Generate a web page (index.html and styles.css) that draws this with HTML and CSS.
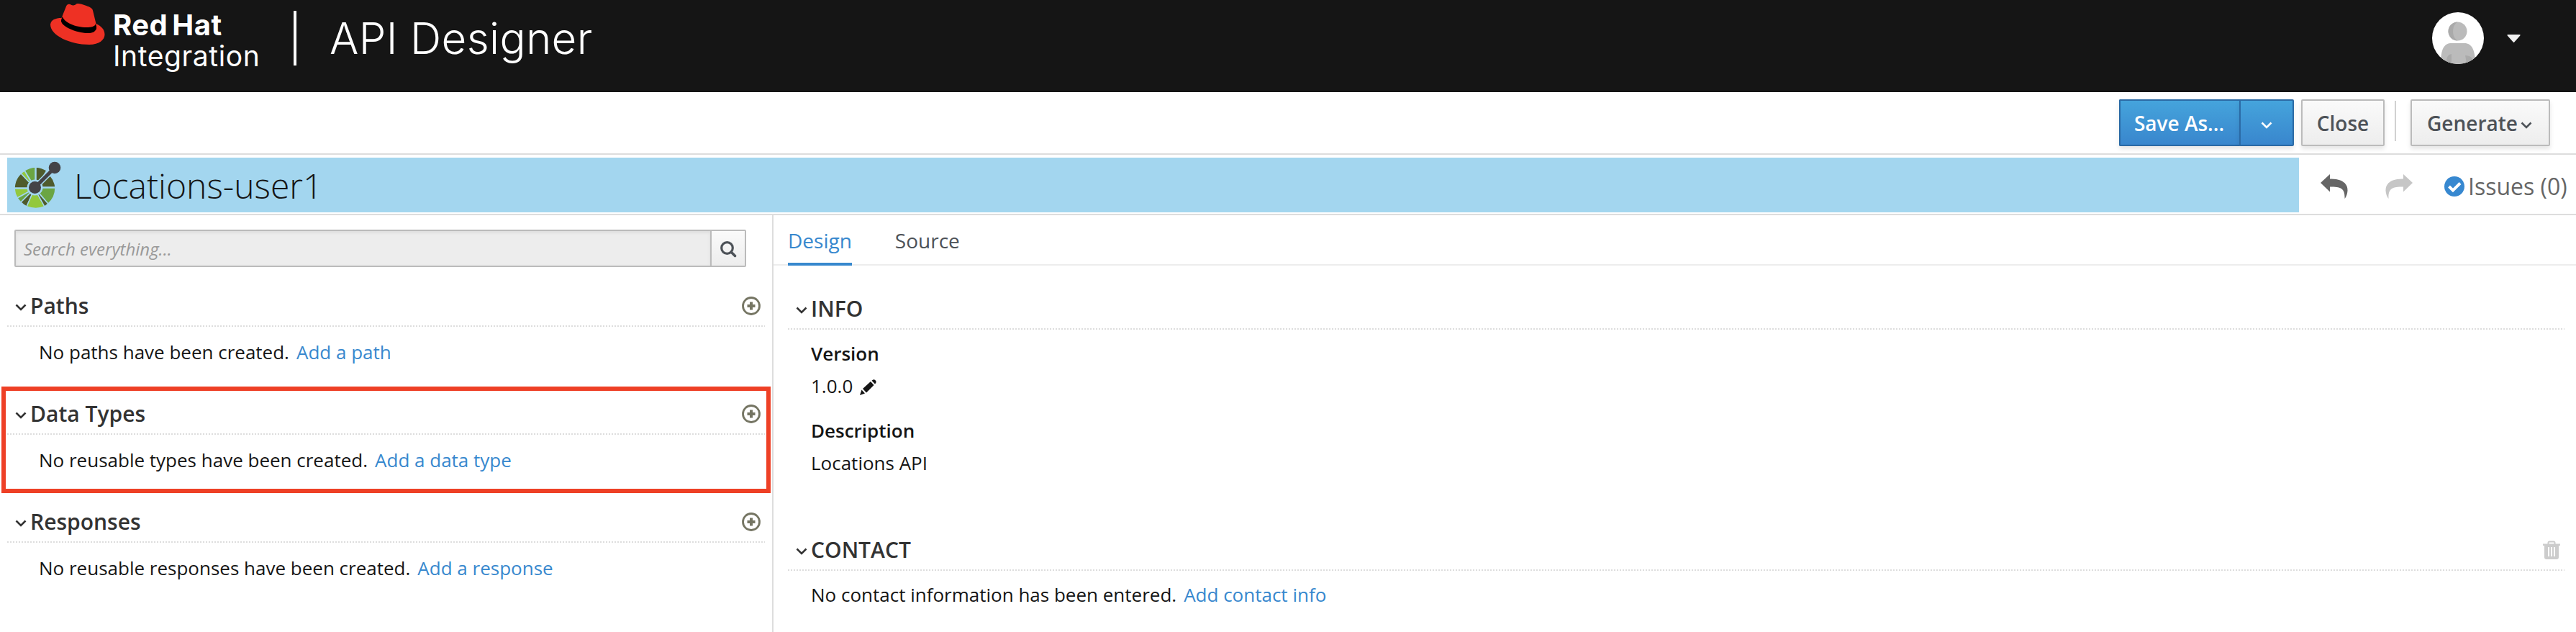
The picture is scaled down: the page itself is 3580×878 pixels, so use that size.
FILE: index.html
```html
<!DOCTYPE html>
<html lang="en">
<head>
<meta charset="utf-8">
<title>API Designer</title>
<link rel="stylesheet" href="styles.css">
</head>
<body>
<svg class="defs" width="0" height="0">
  <symbol id="chev" viewBox="0 0 16 10"><path d="M1.500 1.500 8 8l6.500-6.500" fill="none" stroke="currentColor" stroke-width="2.600"/></symbol>
  <symbol id="plus" viewBox="0 0 26 26"><circle cx="13" cy="13" r="11.500" fill="none" stroke="#757563" stroke-width="2.800"/><path d="M13 7.500v11M7.500 13h11" stroke="#757563" stroke-width="4"/></symbol>
  <symbol id="arrow" viewBox="0 0 38 34"><path d="M0 12 13 0V6.500C30 6 38 13 37.500 23Q37 30 33.500 34C34 21 30 17 13 17.500V24.500Z" fill="currentColor"/></symbol>
</svg>
<header class="masthead">
  <svg class="hat" viewBox="0 0 76 58"><path fill="#ee3124" d="M15.500 20C7 20 1 22.500 0 29C0 44 27 57 54 57C68 57 75.500 50 75.500 43C75.500 36 71 31.500 63.500 28L59 9.500C58 6 55 5 50 3C44 .8 40-.3 37.500.1C35 .6 35 2.500 32 2.500C29 2.500 28.500.7 26 .7C23.500.7 22.300 2.500 21.500 5Z"/><path d="M16.700 17.700C19 26 35 33 50 33C57 33 62 32 63 28Q64.500 32 64 35C62 39.500 58 41 52 41C36 41 13.500 31 15 23Z"/></svg>
  <div class="brand"><span class="brand-name">Red Hat</span><span class="brand-sub">Integration</span></div>
  <div class="brand-rule"></div>
  <h1 class="product">API Designer</h1>
  <div class="user">
    <svg class="avatar" viewBox="0 0 72 72"><defs><clipPath id="av"><circle cx="36" cy="36" r="36"/></clipPath></defs><g clip-path="url(#av)"><path fill="#fff" d="M0 0h72v72H0z"/><ellipse cx="35.500" cy="26.500" rx="13" ry="13" fill="#bbb"/><path fill="#aaa" d="M35.500 13.500a13 13 0 0 0 0 26C27 35 27 18 35.500 13.500Z"/><path fill="#bbb" d="M12 72C12 50 17 43 27 43H45C55 43 60 52 60 72Z"/><path fill="#aaa" d="M20 72C19 63 22 59 27 58V72ZM48 72Q47 65 46 60Q54 60 57 66V72Z"/></g></svg>
    <svg class="caret" viewBox="0 0 19 11"><path fill="#f0f0f0" d="M1.500 0h16q2 0 .8 1.500L10.500 10.300q-1 1.200-2 0L.7 1.500Q-.5 0 1.500 0Z"/></svg>
  </div>
</header>
<div class="toolbar">
  <div class="split"><button class="btn primary save">Save As...</button><button class="btn primary drop"><svg class="chev"><use href="#chev"/></svg></button></div>
  <button class="btn close">Close</button>
  <div class="tool-rule"></div>
  <button class="btn generate">Generate<svg class="chev"><use href="#chev"/></svg></button>
</div>
<div class="titlebar">
  <div class="title">
    <svg class="oai" viewBox="0 0 64 64">
      <g stroke="#a3d6ef" stroke-width="1.500">
        <path fill="#4f5b2c" d="M30 36V7A29 29 0 0 1 45 12Z"/>
        <path fill="#6ba543" d="M29 36V7A29 29 0 0 0 14 12Z"/>
        <path fill="#93c83e" d="M28 36 14 12A29 29 0 0 0 9 16Z"/>
        <path fill="#4f5b2c" d="M28 36 9 16A29 29 0 0 0 0 36Z"/>
        <path fill="#93c83e" d="M28 37H0A29 29 0 0 0 4 50Z"/>
        <path fill="#6ba543" d="M28 37 4 50A29 29 0 0 0 9 56Z"/>
        <path fill="#4f5b2c" d="M28 37 9 56A29 29 0 0 0 17 62Z"/>
        <path fill="#93c83e" d="M28 37 17 62Q30 67 42 62Z"/>
        <path fill="#4f5b2c" d="M28 37 42 62 47 58Z"/>
        <path fill="#6ba543" d="M28 36H57A29 29 0 0 1 47 58Z"/>
        <path fill="#4f5b2c" d="M28 35H57A29 29 0 0 0 50 19Z"/>
      </g>
      <circle cx="28.500" cy="35.500" r="11" fill="#a3d6ef"/>
      <path d="M28 36 56 8" stroke="#a3d6ef" stroke-width="8"/>
      <path d="M28 36 56 8" stroke="#444347" stroke-width="5"/>
      <circle cx="28.500" cy="35.500" r="8.500" fill="#444347"/><circle cx="56" cy="8" r="8.300" fill="#444347"/>
    </svg>
    <span class="title-text">Locations-user1</span>
  </div>
  <div class="actions">
    <svg class="undo"><use href="#arrow"/></svg>
    <svg class="redo"><use href="#arrow"/></svg>
    <svg class="check" viewBox="0 0 28 28"><circle cx="14" cy="14" r="14" fill="#3788d0"/><path d="m6.500 14 5.500 5.500 10-10" fill="none" stroke="#fff" stroke-width="4"/></svg>
    <span class="issues">Issues (0)</span>
  </div>
</div>
<main class="main">
  <aside class="side">
    <div class="search"><div class="search-input">Search everything...</div><div class="search-btn"><svg viewBox="0 0 22 22"><circle cx="9.500" cy="9.500" r="7.800" fill="none" stroke="#4d5258" stroke-width="3.200"/><path d="m15 15 5.500 5.500" stroke="#4d5258" stroke-width="3.600" stroke-linecap="round"/></svg></div></div>
    <section class="group"><h2 class="head"><svg class="chev"><use href="#chev"/></svg><span>Paths</span><svg class="plus"><use href="#plus"/></svg></h2><p class="empty">No paths have been created.<a class="link">Add a path</a></p></section>
    <section class="group marked"><h2 class="head"><svg class="chev"><use href="#chev"/></svg><span>Data Types</span><svg class="plus"><use href="#plus"/></svg></h2><p class="empty">No reusable types have been created.<a class="link">Add a data type</a></p></section>
    <section class="group"><h2 class="head"><svg class="chev"><use href="#chev"/></svg><span>Responses</span><svg class="plus"><use href="#plus"/></svg></h2><p class="empty">No reusable responses have been created.<a class="link">Add a response</a></p></section>
  </aside>
  <div class="content">
    <nav class="tabs"><span class="tab active">Design</span><span class="tab">Source</span></nav>
    <section class="panel info">
      <h2 class="head"><svg class="chev"><use href="#chev"/></svg><span>INFO</span></h2>
      <div class="label">Version</div>
      <div class="value">1.0.0<svg class="pencil" viewBox="0 0 24 22"><path fill="#151515" d="M0 22 2.500 14.500 7 19.500ZM4 13 15 3 19.500 8 9 18.500ZM16.500 1.800Q19-1 21.500 1.200Q24 3.500 21 6.500Z"/></svg></div>
      <div class="label">Description</div>
      <div class="value">Locations API</div>
    </section>
    <section class="panel contact">
      <h2 class="head"><svg class="chev"><use href="#chev"/></svg><span>CONTACT</span><svg class="trash" viewBox="0 0 24 26"><path fill="none" stroke="#ccc" stroke-width="2" d="M7.500 5V3q0-1.500 1.500-1.500h6q1.500 0 1.500 1.500v2"/><path fill="#ccc" fill-rule="evenodd" d="M0 4.500h24V7h-2v16q0 3-3 3H5q-3 0-3-3V7H0ZM7 9v13h2V9ZM11 9v13h2V9ZM15 9v13h2V9Z"/></svg></h2>
      <p class="empty">No contact information has been entered.<a class="link">Add contact info</a></p>
    </section>
  </div>
</main>
</body>
</html>
```
FILE: styles.css
```css
*, *::before, *::after { box-sizing: border-box; }
body { margin: 0; width: 3580px; height: 878px; overflow: hidden; background: #fff; color: #151515; font: 26px/40px "Open Sans", sans-serif; }
svg { display: block; flex: none; overflow: visible; }
.defs { position: absolute; }
h1, h2, p { margin: 0; font-weight: 400; }
.masthead { height: 128px; background: #151515; color: #fff; display: flex; align-items: flex-start; padding-left: 70px; font-family: Inter, sans-serif; }
.hat { width: 76px; height: 58px; margin-top: 5px; }
.brand { width: 262px; padding: 13px 0 0 11px; display: flex; flex-direction: column; font-size: 39px; line-height: 43px; white-space: nowrap; }
.brand-name { font-size: 40px; font-weight: 700; letter-spacing: .5px; word-spacing: -4px; }
.brand-sub { letter-spacing: .6px; }
.brand-rule { width: 4px; height: 76px; background: #fff; margin-top: 15px; }
.product { font-size: 60px; font-weight: 300; line-height: 76px; letter-spacing: .35px; margin: 15px 0 0 46px; white-space: nowrap; }
.user { margin-left: auto; display: flex; padding: 17px 77px 0 0; }
.avatar { width: 72px; height: 72px; }
.caret { width: 19px; height: 11px; margin: 31px 0 0 32px; }
.toolbar { height: 87px; border-bottom: 2px solid #ddd; padding: 10px 36px 0 0; display: flex; justify-content: flex-end; }
.btn { height: 65px; border: 2px solid #bbb; border-radius: 2px; background: linear-gradient(#fafafa, #ededed); box-shadow: 0 4px 6px rgba(3,3,3,.1); color: #4d5258; font: 600 28px/40px "Open Sans", sans-serif; display: flex; align-items: center; justify-content: center; padding: 0; white-space: nowrap; }
.split { display: flex; margin-right: 10px; }
.primary { border-color: #2b6aa5; background: linear-gradient(#45a4dc, #3986cd); color: #fff; }
.save { width: 167px; border-right: 0; border-radius: 2px 0 0 2px; padding-right: 2px; }
.drop { width: 76px; border-radius: 0 2px 2px 0; }
.chev { width: 16px; height: 10px; }
.drop .chev { margin-top: 6px; }
.close { width: 116px; }
.tool-rule { width: 2px; height: 56px; background: #d1d1d1; margin: 2px 20px 0 14px; }
.generate { width: 194px; padding-right: 2px; }
.generate .chev { margin: 6px 0 0 4px; }
.titlebar { height: 84px; border-bottom: 2px solid #ddd; padding: 4px 0 0 10px; display: flex; }
.title { flex: none; width: 3185px; height: 76px; background: #a3d6ef; display: flex; padding: 6px 0 0 10px; }
.oai { width: 64px; height: 64px; }
.title-text { font-size: 48px; font-weight: 300; line-height: 66px; margin: 0 0 0 19px; white-space: nowrap; }
.actions { display: flex; color: #666; }
.undo, .redo { width: 38px; height: 34px; margin: 23px 0 0 30px; }
.redo { margin-left: 52px; color: #c6c6c6; transform: scaleX(-1); }
.check { width: 28px; height: 28px; margin: 26px 5px 0 44px; }
.issues { font-size: 32px; line-height: 44px; margin-top: 18px; white-space: nowrap; }
.main { display: flex; height: 579px; }
.side { width: 1075px; border-right: 2px solid #ddd; padding-top: 20px; }
.search { display: flex; width: 1017px; height: 52px; margin-left: 20px; border: 2px solid #bbb; border-radius: 2px; }
.search-input { flex: 1; background: #ededed; box-shadow: inset 0 2px 4px rgba(3,3,3,.08); color: #999; font-size: 24px; font-style: italic; line-height: 50px; padding-left: 11px; }
.search-btn { width: 48px; border-left: 2px solid #bbb; background: linear-gradient(#fafafa, #ededed); padding: 14px 0 0 12px; }
.search-btn svg { width: 22px; height: 22px; }
.head { display: flex; align-items: center; height: 58px; color: #333; font-size: 30px; font-weight: 600; line-height: 40px; padding: 2px 6px 2px 11px; white-space: nowrap; background: repeating-linear-gradient(90deg, #ddd 0 2px, transparent 2px 4px) bottom / 100% 2px no-repeat; }
.head .chev { margin: 4px 5px 0 0; }
.group { height: 150px; padding: 0 10px; position: relative; }
.search + .group { margin-top: 25px; }
.plus { width: 26px; height: 26px; margin-left: auto; }
.empty { white-space: nowrap; }
.group .empty { padding: 15px 0 0 44px; }
.link { color: #3788ce; margin-left: 10px; }
.marked::after { content: ""; position: absolute; left: 2px; top: -9px; width: 1069px; height: 148px; border: 6px solid #ee4026; }
.content { flex: 1; min-width: 0; }
.tabs { height: 70px; border-bottom: 2px solid #ededed; padding-left: 20px; display: flex; gap: 60px; }
.tab { height: 70px; font-size: 28px; line-height: 70px; color: #4d5258; }
.tab.active { color: #3788ce; border-bottom: 4px solid #3788ce; }
.panel { padding: 0 16px 0 20px; }
.info { height: 334px; padding-top: 31px; }
.label { font-weight: 600; margin: 13px 0 0 32px; height: 40px; }
.value { margin: 5px 0 0 32px; height: 43px; display: flex; }
.value + .label { margin-top: 19px; }
.pencil { width: 24px; height: 22px; margin: 11px 0 0 10px; }
.contact { padding-top: 32px; }
.trash { width: 24px; height: 26px; margin-left: auto; }
.contact .empty { padding: 13px 0 0 32px; }
```
